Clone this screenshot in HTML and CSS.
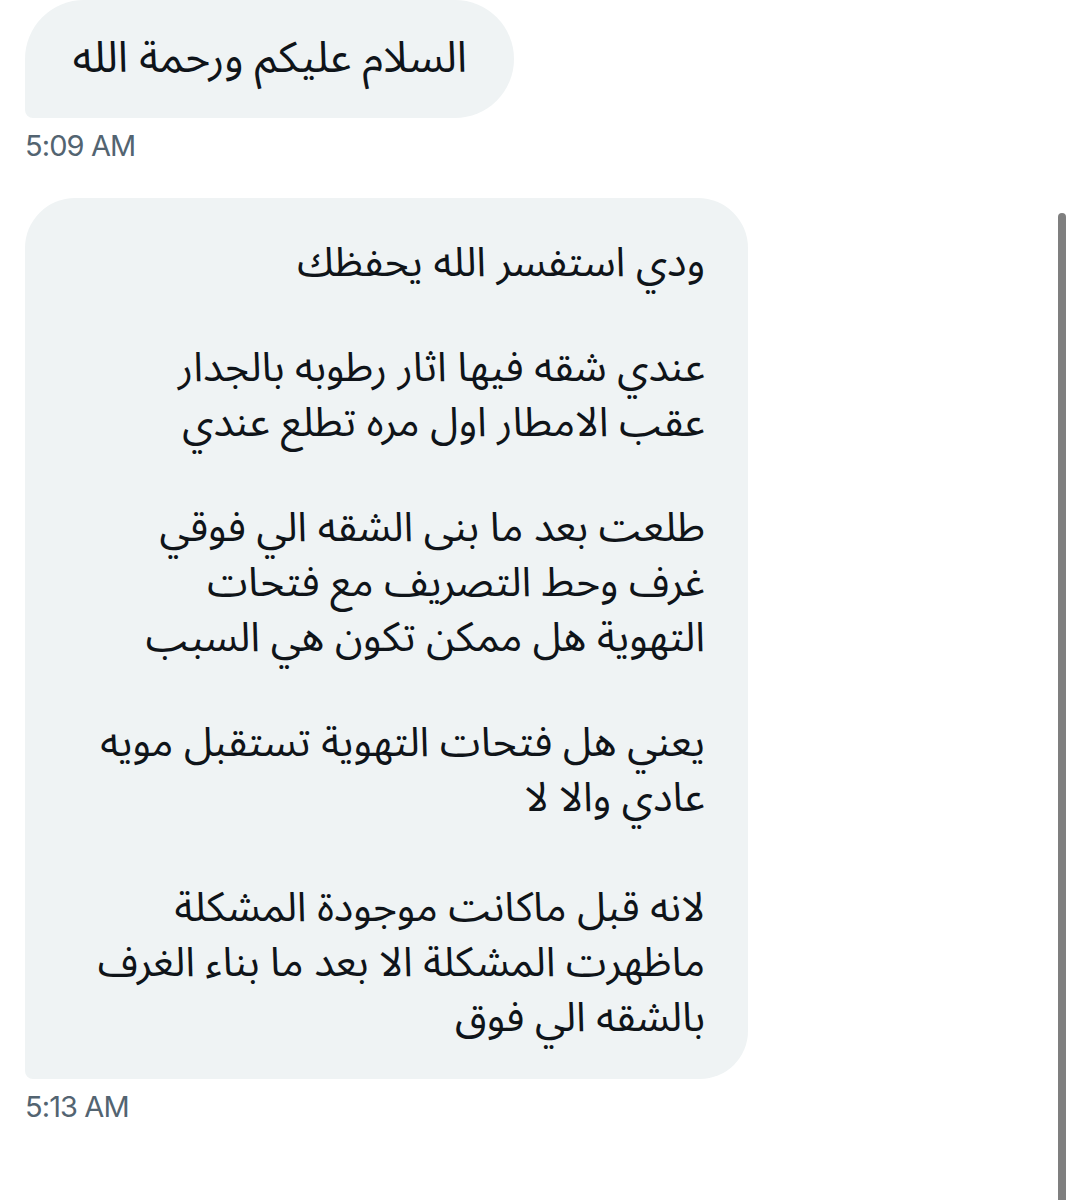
FILE: index.html
```html
<!DOCTYPE html>
<html lang="ar">
<head>
  <meta charset="UTF-8">
  <title>Messages</title>
  <link rel="stylesheet" href="styles.css">
</head>
<body>

  <div class="chat">
    <div class="msg">
      <div class="bubble short">السلام عليكم ورحمة الله</div>
      <div class="time">5:09 AM</div>
    </div>

    <div class="msg">
      <div class="bubble long">
        <p>ودي استفسر الله يحفظك</p>
        <p>عندي شقه فيها اثار رطوبه بالجدار<br>عقب الامطار اول مره تطلع عندي</p>
        <p>طلعت بعد ما بنى الشقه الي فوقي<br>غرف وحط التصريف مع فتحات<br>التهوية هل ممكن تكون هي السبب</p>
        <p>يعني هل فتحات التهوية تستقبل مويه<br>عادي والا لا</p>
        <p class="last">لانه قبل ماكانت موجودة المشكلة<br>ماظهرت المشكلة الا بعد ما بناء الغرف<br>بالشقه الي فوق</p>
      </div>
      <div class="time">5:13 AM</div>
    </div>
  </div>

  <div class="scrollbar"></div>

</body>
</html>
```

FILE: styles.css
```css
body { margin: 0; background: #fff; }
.chat { padding: 0 25px; }
.msg { display: flex; flex-direction: column; align-items: flex-start; }
.bubble { background: #eff3f4; color: #0f1419; direction: rtl; text-align: right; font-family: "Noto Sans Arabic", "DejaVu Sans", sans-serif; font-size: 41px; box-sizing: border-box; }
.bubble.short { width: 489px; height: 118px; display: flex; align-items: center; padding: 0 47px 2px 20px; border-radius: 59px 59px 59px 8px; font-size: 43px; }
.bubble.long { width: 723px; padding: 38px 43px 33px 30px; line-height: 55px; border-radius: 50px 50px 48px 8px; display: flex; flex-direction: column; gap: 50px; }
.bubble p { margin: 0; }
.bubble p.last { margin-top: 5px; }
.time { font-family: Inter, "Liberation Sans", sans-serif; font-size: 29px; line-height: 34px; color: #536471; letter-spacing: -0.9px; margin-top: 11px; margin-bottom: 35px; }
.scrollbar { position: absolute; left: 1058px; top: 213px; width: 8px; height: 987px; background: #7f7f7f; border-radius: 4px 4px 0 0; }
```
